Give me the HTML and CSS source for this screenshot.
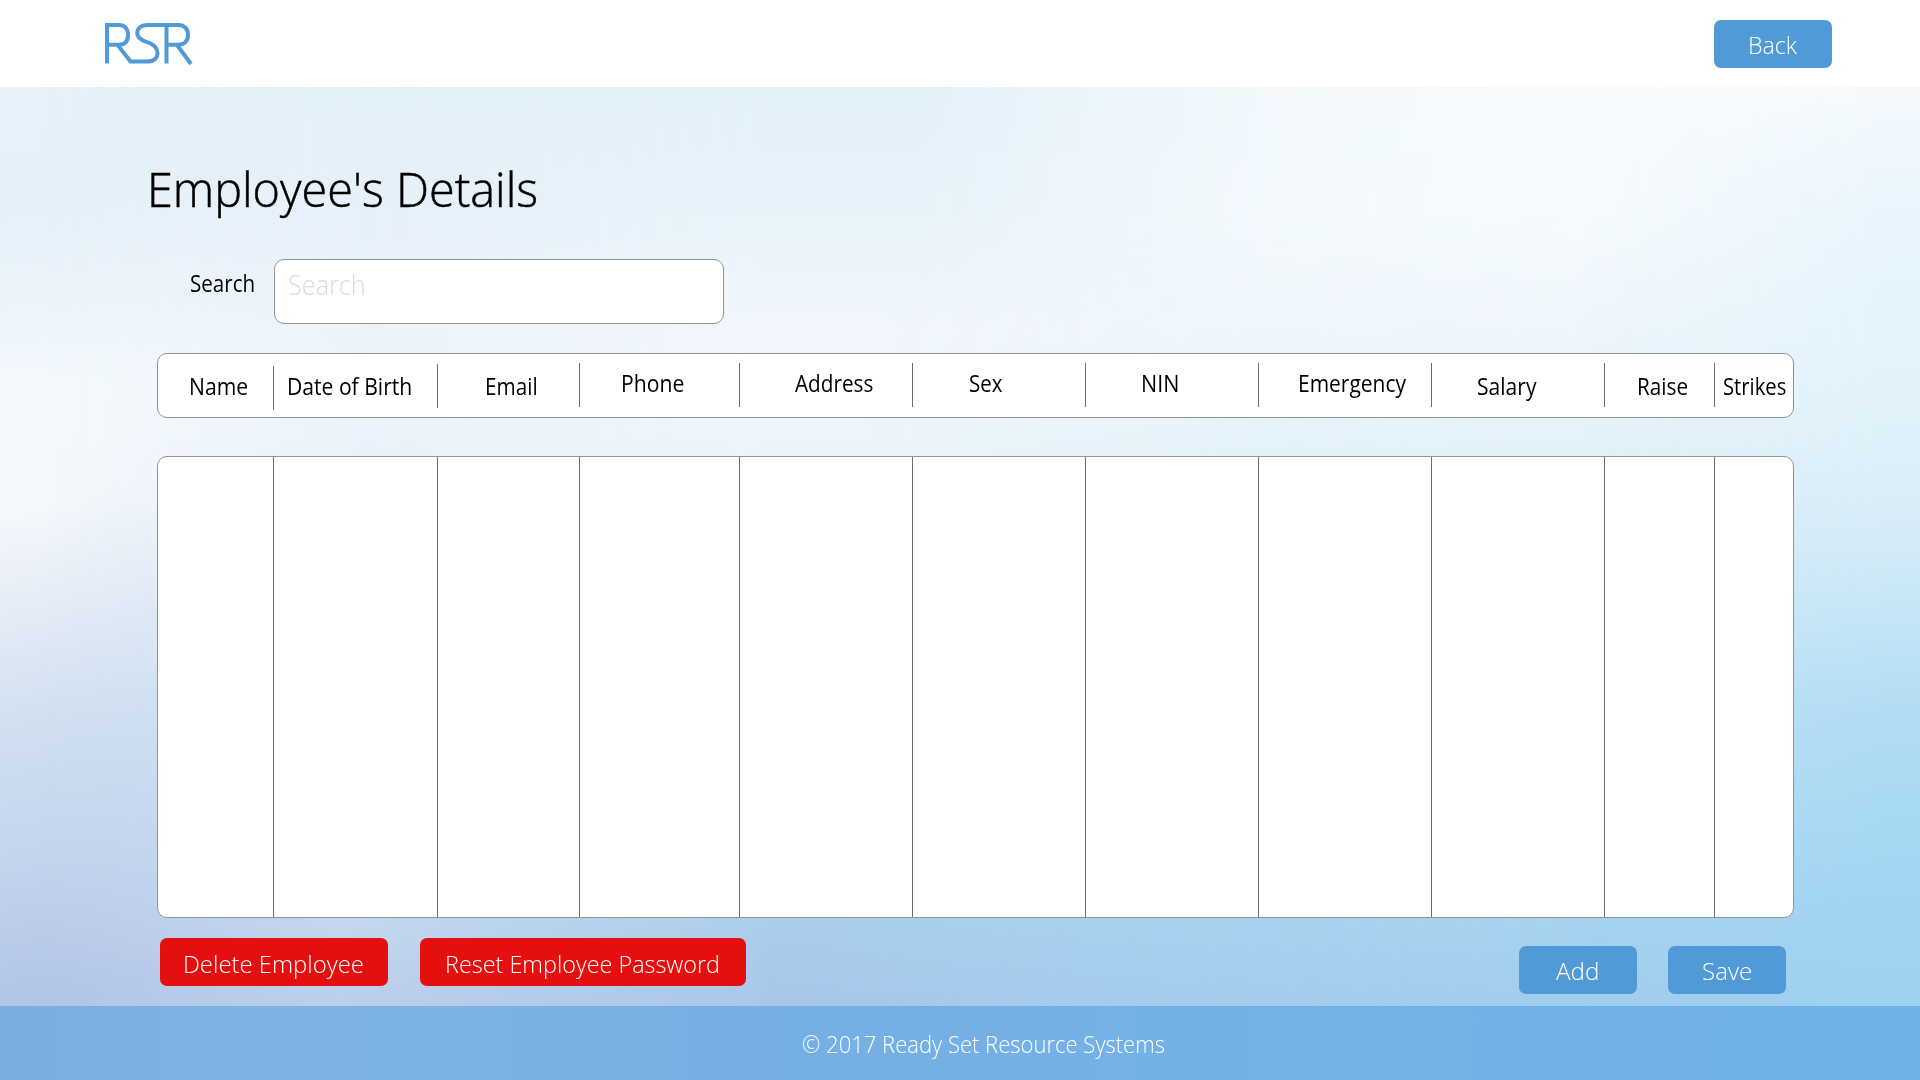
FILE: index.html
```
<!DOCTYPE html>
<html lang="en">
<head>
<meta charset="utf-8">
<title>Employee's Details</title>
<link rel="stylesheet" href="styles.css">
</head>
<body>
<div class="backdrop">
  <div class="wash wash-left"></div>
  <div class="wash wash-center"></div>
  <div class="wash wash-inner"></div>
  <div class="wash wash-outer"></div>
  <div class="wash wash-right"></div>
</div>
<div class="page">
  <header class="topbar">
    <svg class="logo" width="92" height="44" viewBox="0 0 92 44" fill="none" stroke="#509bd7" stroke-width="4" aria-label="RSR">
      <path d="M4 42.500V4H16C22 4 25 8 25 14S22 23.700 16 23.700H5"/>
      <path d="M15 24.500L27.500 40.500H44C51 40.500 54.500 37 54.500 32C54.500 27 52 24.500 46.500 22L42 20.300C36.500 18 34.200 16 34.200 12.500C34.200 7 38 4 44.500 4H75C81.500 4 85 8 85 14S81.500 23.700 75 23.700H64"/>
      <path d="M63.500 4V42.500M74 24L88 43"/>
    </svg>
    <button class="btn btn-back"><span>Back</span></button>
  </header>

  <main class="content">
    <h1 class="title"><span>Employee's Details</span></h1>

    <div class="search">
      <label class="search-label" for="search"><span>Search</span></label>
      <div class="search-box" id="search"><span>Search</span></div>
    </div>

    <div class="panel columns head">
      <div class="cell name"><span>Name</span></div>
      <div class="cell birth"><span>Date of Birth</span></div>
      <div class="cell email"><span>Email</span></div>
      <div class="cell phone"><span>Phone</span></div>
      <div class="cell address"><span>Address</span></div>
      <div class="cell sex"><span>Sex</span></div>
      <div class="cell nin"><span>NIN</span></div>
      <div class="cell emergency"><span>Emergency</span></div>
      <div class="cell salary"><span>Salary</span></div>
      <div class="cell raise"><span>Raise</span></div>
      <div class="cell strikes"><span>Strikes</span></div>
    </div>

    <div class="panel columns body">
      <div></div><div></div><div></div><div></div><div></div><div></div><div></div><div></div><div></div><div></div><div></div>
    </div>

    <div class="actions">
      <div class="group danger">
        <button class="btn btn-delete"><span>Delete Employee</span></button>
        <button class="btn btn-reset"><span>Reset Employee Password</span></button>
      </div>
      <div class="group primary">
        <button class="btn btn-add"><span>Add</span></button>
        <button class="btn btn-save"><span>Save</span></button>
      </div>
    </div>
  </main>

  <footer class="footer"><span>© 2017 Ready Set Resource Systems</span></footer>
</div>
</body>
</html>
```
FILE: styles.css
```
* { box-sizing: border-box; }

body {
  margin: 0;
  height: 1080px;
  overflow: hidden;
  font-family: "Open Sans", "Noto Sans", sans-serif;
  color: #000;
}

span {
  display: inline-block;
  white-space: nowrap;
  transform-origin: left center;
}

/* Soft sky background: vertical washes that fade into each other from left to right */
.backdrop { position: absolute; inset: 0; z-index: -1; overflow: hidden; }
.wash { position: absolute; inset: 0; }
.wash-left {
  background: linear-gradient(172deg, #e7f2fa 7%, #e5f1f9 15.5%, #ecf4fb 22%, #f5fafd 30%, #f5f8fc 38%, #e4ebf6 46%, #d2e1f1 53%, #c3d4ed 64%, #b3c5e7 74%);
}
.wash-center {
  background: linear-gradient(#e3f1fa 8%, #e8f1fa 22%, #eef4fb 34%, #ebf3fb 41%, #c9def3 70%, #c5d7ee 86%, #bccfea 93%);
  -webkit-mask-image: linear-gradient(90deg, transparent 2%, #000 18%);
  mask-image: linear-gradient(90deg, transparent 2%, #000 18%);
}
.wash-inner {
  background: linear-gradient(#e3f1fa 8%, #e8f3fa 20%, #f2f7fc 31%, #edf5fb 41%, #abcdec 86%, #a9c7ea 93%);
  -webkit-mask-image: linear-gradient(90deg, transparent 18%, #000 40%);
  mask-image: linear-gradient(90deg, transparent 18%, #000 40%);
}
.wash-outer {
  background: linear-gradient(#f9fcfe 8%, #f7fbfd 20%, #edf5fc 32%, #e2f2fa 41%, #a6d2f0 86%, #a2cdee 93%);
  -webkit-mask-image: linear-gradient(100deg, transparent 44%, rgba(0,0,0,.75) 62%, #000 82%);
  mask-image: linear-gradient(100deg, transparent 44%, rgba(0,0,0,.75) 62%, #000 82%);
}
.wash-right {
  background: linear-gradient(#f5fafd 8%, #e9f5fd 20%, #e3f4fb 32%, #def0f9 42%, #d5ebf8 50%, #c2e5f6 58%, #b2dcf4 66%, #a9daf3 74%, #a2d4f3 83%, #9fd1f0 93%);
  -webkit-mask-image: linear-gradient(90deg, transparent 82%, #000 98%);
  mask-image: linear-gradient(90deg, transparent 82%, #000 98%);
}

.page { display: flex; flex-direction: column; height: 1080px; }

.topbar {
  display: flex;
  justify-content: space-between;
  align-items: flex-start;
  height: 87px;
  padding: 20px 88px 0 103px;
  background: #fff;
}
.logo { margin-top: 1px; }

.btn {
  width: 118px;
  height: 48px;
  padding: 0;
  border: 0;
  border-radius: 7px;
  background: #509bd7;
  color: #fff;
  font: 300 24px/49px "Open Sans", "Noto Sans", sans-serif;
  text-align: left;
}
.btn-back { padding-left: 34px; }
.btn-back span { transform: scaleX(.965); }

.content { flex: 1; padding: 0 126px 0 157px; }

.title {
  margin: 69px 0 0 -10px;
  height: 66px;
  font-size: 48px;
  line-height: 66px;
  font-weight: 300;
  -webkit-text-stroke: .5px #000;
}
.title span { transform: scaleX(.975); }

.search { display: flex; margin-top: 37px; height: 65px; }
.search-label {
  width: 117px;
  padding: 9px 0 0 32.600px;
  font-size: 23px;
  line-height: 30px;
}
.search-label span { transform: scaleX(.895); }
.search-box {
  width: 450px;
  padding: 5px 0 0 13px;
  border: 1px solid #8f9499;
  border-radius: 10px;
  background: #fff;
  color: #dcdcdc;
  font-size: 28px;
  line-height: 38px;
  font-weight: 300;
}
.search-box span { transform: scaleX(.902); }

.panel {
  width: 1637px;
  border: 1px solid #8f9499;
  border-radius: 10px;
  background: #fff;
}
.columns {
  display: grid;
  grid-template-columns: 115px 164px 142px 160px repeat(5, 173px) 110px 79px;
}
.columns > * + * { border-left: 1px solid #6e6e6e; }

.head { height: 65px; margin-top: 29px; }
.cell {
  height: 44px;
  margin-top: 9px;
  padding-top: 5px;
  font-size: 23px;
  line-height: 30px;
}
.name { padding: 8px 0 0 31.200px; }
.name span { transform: scaleX(.92); }
.birth { margin-top: 12px; padding: 5px 0 0 13.400px; }
.birth span { transform: scaleX(.918); }
.email { margin-top: 10px; padding: 7px 0 0 46.800px; }
.email span { transform: scaleX(.9); }
.phone { padding-left: 41.200px; }
.phone span { transform: scaleX(.92); }
.address { padding-left: 55px; }
.address span { transform: scaleX(.901); }
.sex { padding-left: 55.600px; }
.sex span { transform: scaleX(.89); }
.nin { padding-left: 55.200px; }
.nin span { transform: scaleX(.935); }
.emergency { padding-left: 39.300px; }
.emergency span { transform: scaleX(.912); }
.salary { padding: 8px 0 0 44.600px; }
.salary span { transform: scaleX(.916); }
.raise { padding: 8px 0 0 31.800px; }
.raise span { transform: scaleX(.902); }
.strikes { padding: 8px 0 0 7.600px; }
.strikes span { transform: scaleX(.88); }

.body { height: 462px; margin-top: 38px; }

.actions { display: flex; justify-content: space-between; padding: 20px 8px 0 3px; }
.group { display: flex; }
.danger { gap: 32px; }
.danger .btn { background: #e50f0f; }
.primary { gap: 31px; padding-top: 8px; }
.btn-delete { width: 228px; padding-left: 23px; line-height: 51px; }
.btn-delete span { transform: scaleX(.995); }
.btn-reset { width: 326px; padding-left: 25px; line-height: 51px; }
.btn-reset span { transform: scaleX(.975); }
.btn-add { padding-left: 37px; }
.btn-add span { transform: scaleX(1.01); }
.btn-save { padding-left: 33.500px; }
.btn-save span { transform: scaleX(1.005); }

.footer {
  height: 74px;
  padding-left: 802px;
  background: linear-gradient(90deg, #7aade2, #7fb3e4 14%, #76afe4 42%, #72b2e7 65%, #6fb2e8);
  color: #fff;
  font-size: 24px;
  line-height: 75px;
  font-weight: 300;
}
.footer span { transform: scaleX(.918); }
```
